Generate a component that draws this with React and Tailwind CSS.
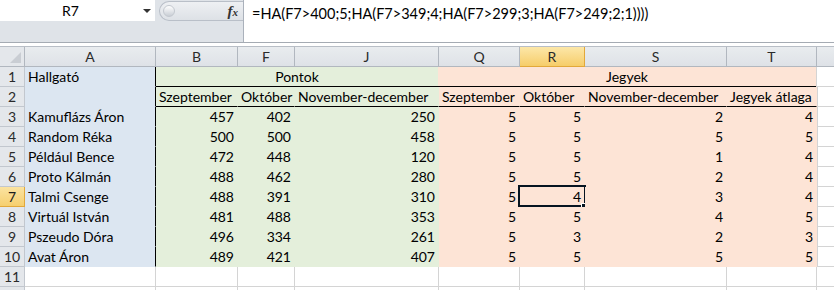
import React from 'react';

// column layout: key, width class, fill zone
const COLS = [
  { key: 'A', w: 'w-[131px]', zone: 'blue' },
  { key: 'B', w: 'w-[82px]', zone: 'green' },
  { key: 'F', w: 'w-[57px]', zone: 'green' },
  { key: 'J', w: 'w-[144px]', zone: 'green' },
  { key: 'Q', w: 'w-[81px]', zone: 'peach' },
  { key: 'R', w: 'w-[65px]', zone: 'peach' },
  { key: 'S', w: 'w-[142px]', zone: 'peach' },
  { key: 'T', w: 'w-[90px]', zone: 'peach' },
];

const STUDENTS = [
  ['Kamuflázs Áron', 457, 402, 250, 5, 5, 2, 4],
  ['Random Réka', 500, 500, 458, 5, 5, 5, 5],
  ['Például Bence', 472, 448, 120, 5, 5, 1, 4],
  ['Proto Kálmán', 488, 462, 280, 5, 5, 2, 4],
  ['Talmi Csenge', 488, 391, 310, 5, 4, 3, 4],
  ['Virtuál István', 481, 488, 353, 5, 5, 4, 5],
  ['Pszeudo Dóra', 496, 334, 261, 5, 3, 2, 3],
  ['Avat Áron', 489, 421, 407, 5, 5, 5, 5],
];

const FILL = {
  blue: 'bg-[#dce6f1] border-[#dce6f1]',
  green: 'bg-[#e4efdb] border-[#e4efdb]',
  peach: 'bg-[#fde4d6] border-[#fde4d6]',
};

function RowHeader({ n, active }) {
  return (
    <div
      className={`w-[25px] h-[20px] shrink-0 flex items-center justify-center border-r border-b text-[14px] ${
        active
          ? 'bg-gradient-to-b from-[#fbe3a0] to-[#f6cf6e] border-[#e2a83a] text-[#1d1d1d]'
          : 'bg-[#e4e7eb] border-[#c2c7ce] text-[#2a2a2a]'
      }`}
    >
      {n}
    </div>
  );
}

function Cell({ col, children, right, bottomBlack, selected }) {
  const fill = FILL[col.zone];
  const rightBorder = col.key === 'A' ? 'border-r-black' : '';
  return (
    <div
      className={`${col.w} h-[20px] shrink-0 relative flex items-center border-r border-b px-[3px] ${fill} ${rightBorder} ${
        bottomBlack ? 'border-b-black' : ''
      } ${right ? 'justify-end' : ''}`}
    >
      <span className="whitespace-nowrap">{children}</span>
      {selected && (
        <>
          <div className="absolute -left-[2px] -top-[2px] right-[-2px] bottom-[-1px] border-2 border-[#061421]" />
          <div className="absolute right-[-4px] bottom-[-4px] w-[7px] h-[7px] bg-[#061421] border border-white" />
        </>
      )}
    </div>
  );
}

function Spill() {
  return <div className="flex-1 h-[20px] border-b border-l border-[#d4d4d4] bg-white" />;
}

export default function App() {
  return (
    <div className="w-[834px] h-[290px] overflow-hidden bg-white text-black font-['Lato',sans-serif] text-[14px] select-none">
      {/* formula bar */}
      <div className="h-[42px] flex">
        <div className="w-[243px] flex flex-col bg-[#dfe3e8]">
          <div className="h-[21px] flex">
            <div className="w-[155px] bg-white flex items-center relative">
              <span className="w-full text-center pr-[14px]">R7</span>
              <span className="absolute right-[4px] top-[9px] w-0 h-0 border-l-[4px] border-r-[4px] border-t-[4px] border-l-transparent border-r-transparent border-t-[#333]" />
            </div>
            <div className="flex-1 flex items-stretch pl-[4px] pt-[1px]">
              <div className="flex-1 flex items-center justify-between rounded-l-full border border-r-0 border-[#b9bfc8] bg-gradient-to-b from-[#eef0f3] to-[#dde1e6] pl-[3px] pr-[5px]">
                <span className="w-[12px] h-[12px] rounded-full bg-gradient-to-b from-white to-[#c9ced5] border border-[#c3c8cf]" />
                <span className="font-['Liberation_Serif',serif] italic font-bold text-[15px] text-[#333] leading-none">
                  f<span className="text-[11px]">x</span>
                </span>
              </div>
            </div>
          </div>
          <div className="flex-1" />
        </div>
        <div className="flex-1 bg-white border-l border-[#aab1bb] pl-[8px] pt-[3px] text-[14.5px] whitespace-nowrap">
          =HA(F7&gt;400;5;HA(F7&gt;349;4;HA(F7&gt;299;3;HA(F7&gt;249;2;1))))
        </div>
      </div>

      {/* separator */}
      <div className="h-[4px] border-t border-[#a5abb3] bg-white" />

      {/* column headers */}
      <div className="h-[21px] flex border-t border-[#b8bec6] text-[14px] text-[#2a2a2a]">
        <div className="w-[25px] h-[20px] shrink-0 bg-[#e4e7eb] border-r border-b border-[#b1b7bf] relative">
          <svg className="absolute right-[3px] bottom-[3px]" width="11" height="11" viewBox="0 0 11 11">
            <polygon points="11,0 11,11 0,11" fill="#c9cdd3" />
          </svg>
        </div>
        {COLS.map((c) => (
          <div
            key={c.key}
            className={`${c.w} h-[20px] shrink-0 flex items-center justify-center border-r border-b ${
              c.key === 'R'
                ? 'bg-gradient-to-b from-[#fce7a8] to-[#f6cd69] border-[#e2a83a]'
                : 'bg-gradient-to-b from-[#e9ecef] to-[#dee2e7] border-[#b1b7bf]'
            }`}
          >
            {c.key}
          </div>
        ))}
        <div className="flex-1 h-[20px] bg-gradient-to-b from-[#e9ecef] to-[#dee2e7] border-b border-[#b1b7bf]" />
      </div>

      {/* row 1 */}
      <div className="flex">
        <RowHeader n={1} />
        <Cell col={COLS[0]}>Hallgató</Cell>
        <div className="w-[282px] h-[20px] shrink-0 flex items-center justify-center bg-[#e4efdb] border-b border-b-black">
          Pontok
        </div>
        <div className="w-[378px] h-[20px] shrink-0 flex items-center justify-center bg-[#fde4d6] border-b border-b-black">
          Jegyek
        </div>
        <Spill />
      </div>

      {/* row 2 */}
      <div className="flex">
        <RowHeader n={2} />
        <Cell col={COLS[0]} />
        <Cell col={COLS[1]} bottomBlack>Szeptember</Cell>
        <Cell col={COLS[2]} bottomBlack>Október</Cell>
        <Cell col={COLS[3]} bottomBlack>November-december</Cell>
        <Cell col={COLS[4]} bottomBlack>Szeptember</Cell>
        <Cell col={COLS[5]} bottomBlack>Október</Cell>
        <Cell col={COLS[6]} bottomBlack>November-december</Cell>
        <Cell col={COLS[7]} bottomBlack>Jegyek átlaga</Cell>
        <Spill />
      </div>

      {/* data rows */}
      {STUDENTS.map((s, i) => (
        <div key={i} className="flex">
          <RowHeader n={i + 3} active={i + 3 === 7} />
          {COLS.map((c, j) => (
            <Cell key={c.key} col={c} right={j > 0} selected={i + 3 === 7 && c.key === 'R'}>
              {s[j]}
            </Cell>
          ))}
          <Spill />
        </div>
      ))}

      {/* empty rows */}
      {[11, 12].map((n) => (
        <div key={n} className="flex">
          <RowHeader n={n === 11 ? n : ''} />
          {COLS.map((c) => (
            <div key={c.key} className={`${c.w} h-[20px] shrink-0 border-r border-b border-[#d4d4d4]`} />
          ))}
          <div className="flex-1 h-[20px] border-b border-[#d4d4d4]" />
        </div>
      ))}
    </div>
  );
}
